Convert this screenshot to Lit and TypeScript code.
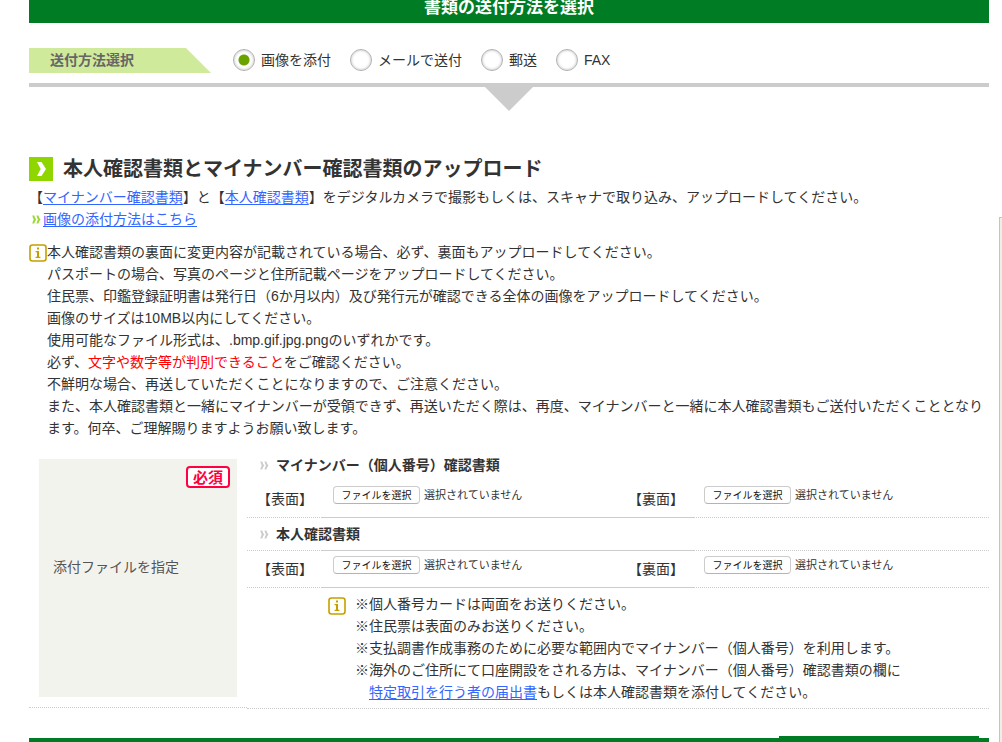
import { LitElement, html, css, svg } from "lit";
import { customElement, property, state } from "lit/decorators.js";

const infoIcon = html`<svg class="info-icon" width="18" height="18" viewBox="0 0 18 18" aria-hidden="true">
  <rect x="1" y="1" width="16" height="16" rx="2.5" fill="#fffef8" stroke="#c3a000" stroke-width="1.6" />
  <path d="M8 3.4h2v2H8zM6.6 7H10v5.8h1.4V14H6.6v-1.2H8V8.2H6.6z" fill="#c3a000" />
</svg>`;

const chevron = (x: number) =>
  svg`<path d=${`M${x} 0.6h1.9Q${x + 2.6} 3.2 ${x + 4} 4.5Q${x + 2.6} 5.8 ${x + 1.9} 8.6H${x}Q${x + 0.5} 5.8 ${x + 1.5} 4.5Q${x + 0.5} 3.2 ${x} 0.6z`} />`;

const doubleChevron = (kind: string) => html`<svg class="chevrons ${kind}" width="9" height="9" viewBox="0 0 9 9" aria-hidden="true">
  ${chevron(0.3)}${chevron(4.5)}
</svg>`;

@customElement("file-field")
export class FileField extends LitElement {
  @property() label = "";
  @state() private fileName = "";

  static styles = css`
    :host {
      display: grid;
      grid-template-columns: 75px 1fr;
      height: 36px;
      align-items: center;
    }
    label {
      padding-left: 10px;
      line-height: 22px;
    }
    .picker {
      display: flex;
      align-items: center;
      gap: 4px;
      padding: 0 0 8px 11px;
    }
    button {
      width: 87px;
      height: 18px;
      padding: 0;
      font: 10px/16px "Noto Sans CJK JP", sans-serif;
      color: #111;
      background: #fff;
      border: 1px solid #ccc;
      border-bottom-color: #b4b4b4;
      border-radius: 4px;
      white-space: nowrap;
    }
    .status {
      font-size: 11px;
      line-height: 16px;
      white-space: nowrap;
    }
    input {
      display: none;
    }
  `;

  private open() {
    (this.renderRoot.querySelector("#file") as HTMLInputElement).click();
  }

  private changed(e: Event) {
    this.fileName = (e.target as HTMLInputElement).files?.[0]?.name ?? "";
  }

  render() {
    return html`
      <label for="pick">${this.label}</label>
      <div class="picker">
        <button id="pick" type="button" @click=${this.open}>ファイルを選択</button>
        <span class="status">${this.fileName || "選択されていません"}</span>
        <input id="file" type="file" accept=".bmp,.gif,.jpg,.png" @change=${this.changed} />
      </div>
    `;
  }
}

@customElement("app-root")
export class AppRoot extends LitElement {
  @state() private method = 0;

  private methods = ["画像を添付", "メールで送付", "郵送", "FAX"];

  static styles = css`
    :host {
      display: flex;
      min-height: 100vh;
      overflow: hidden;
      background: #fff;
      color: #333;
      font: 14px/22px "Liberation Sans", "Noto Sans CJK JP", sans-serif;
    }
    * {
      box-sizing: border-box;
    }
    main {
      flex: 1;
      min-width: 0;
      padding: 0 10px 0 29px;
      display: flex;
      flex-direction: column;
    }
    .side {
      width: 3px;
      margin-top: 217px;
      border: 1px solid #c4c4c0;
      border-width: 1px 0 0 1px;
      background: #eeeee4;
    }
    h1, h2, h3, p, ul {
      margin: 0;
      padding: 0;
    }
    a {
      color: #3366ff;
      text-underline-offset: 2px;
    }
    .banner {
      background: #007d24;
      color: #fff;
      font-size: 17px;
      line-height: 16px;
      padding-bottom: 7px;
      text-align: center;
    }
    .methods {
      display: flex;
      align-items: flex-start;
      gap: 22px;
      padding: 25px 0 10px;
      border-bottom: 4px solid #ccc;
    }
    .methods h2 {
      width: 182px;
      padding-left: 21px;
      background: #d0ea9b;
      clip-path: polygon(0 0, 157px 0, 100% 100%, 0 100%);
      font-size: 14px;
      line-height: 25px;
      color: #666;
    }
    .choices {
      display: flex;
      gap: 19px;
      padding-top: 1px;
    }
    .choices label {
      display: flex;
      align-items: center;
      gap: 6px;
    }
    .choices input {
      appearance: none;
      width: 22px;
      height: 22px;
      margin: 0;
      border: 1px solid #b0b0b0;
      border-radius: 50%;
      background: #fff;
      box-shadow: inset 0 0 3px #bbb;
    }
    .choices input:checked {
      background: radial-gradient(circle, #6aa300 5px, #fff 6px);
    }
    .pointer {
      align-self: center;
      width: 48px;
      height: 24px;
      background: #ccc;
      clip-path: polygon(0 0, 100% 0, 50% 100%);
    }
    .title {
      display: flex;
      align-items: center;
      gap: 10px;
      margin: 46px 0 5px;
      font-size: 20px;
      line-height: 24px;
    }
    .more {
      display: flex;
      align-items: center;
      gap: 2px;
      padding-left: 3px;
    }
    .chevrons {
      flex: none;
      fill: #ccc;
    }
    .chevrons.green {
      fill: #98da30;
    }
    .notice {
      display: flex;
      margin: 11px 0 10px;
    }
    .info-icon {
      flex: none;
      margin-top: 3px;
    }
    .warn {
      color: #f00;
    }
    .attach {
      display: grid;
      grid-template-columns: 218px 1fr;
    }
    .item {
      padding: 10px;
      margin-bottom: 1px;
      border-bottom: 1px dotted #ccc;
      display: flex;
    }
    .item-box {
      flex: 1;
      display: flex;
      flex-direction: column;
      gap: 68px;
      padding: 7px 7px 0 14px;
      background: #f3f3ee;
      color: #555;
    }
    .required {
      align-self: flex-end;
      padding: 0 5px;
      border: 2px solid #ff0040;
      border-radius: 4px;
      background: #fff;
      color: #ff0040;
      font: bold 15px/18px "Noto Sans CJK JP", sans-serif;
    }
    .group {
      display: flex;
      align-items: center;
      gap: 7px;
      padding-left: 13px;
      font-size: 14px;
      line-height: 32px;
    }
    .pair {
      display: grid;
      grid-template-columns: 1fr 1fr;
    }
    .rule {
      display: grid;
      grid-template-columns: 75px 1fr calc(50% - 76px);
    }
    .rule span {
      border-bottom: 1px dotted #ccc;
    }
    .rule .solid {
      border-bottom-style: solid;
    }
    .notes {
      display: flex;
      gap: 9px;
      padding: 5px 0 5px 81px;
      border-bottom: 1px dotted #ccc;
    }
    .notes .info-icon {
      margin-top: 4px;
    }
    .notes ul {
      list-style: none;
    }
    .notes li {
      padding-left: 14px;
      text-indent: -14px;
    }
    footer {
      margin-top: 27px;
      display: flex;
      flex-direction: column;
    }
    .tab {
      align-self: flex-end;
      width: 200px;
      height: 2px;
      margin-right: 10px;
      background: #007d24;
    }
    .bar {
      height: 4px;
      background: #007d24;
    }
  `;

  private rule() {
    return html`<div class="rule"><span></span><span class="solid"></span><span></span></div>`;
  }

  private pair() {
    return html`<div class="pair">
      <file-field label="【表面】"></file-field>
      <file-field label="【裏面】"></file-field>
    </div>`;
  }

  render() {
    return html`
      <main lang="ja">
        <h1 class="banner">書類の送付方法を選択</h1>

        <div class="methods">
          <h2>送付方法選択</h2>
          <div class="choices">
            ${this.methods.map(
              (name, i) => html`<label>
                <input type="radio" name="method" .checked=${i === this.method} @change=${() => (this.method = i)} />${name}</label>`
            )}
          </div>
        </div>
        <div class="pointer"></div>

        <h2 class="title">
          <svg width="24" height="24" viewBox="0 0 24 24" aria-hidden="true">
            <rect width="24" height="24" fill="#8fd600" />
            <path d="M8 5h4.5l4.5 7-4.5 7H8l3.7-7z" fill="#fff" />
          </svg>
          本人確認書類とマイナンバー確認書類のアップロード
        </h2>
        <p>【<a href="#mynumber">マイナンバー確認書類</a>】と【<a href="#identity">本人確認書類</a>】をデジタルカメラで撮影もしくは、スキャナで取り込み、アップロードしてください。</p>
        <p class="more">${doubleChevron("green")}<a href="#howto">画像の添付方法はこちら</a></p>

        <div class="notice">
          ${infoIcon}
          <div>
            <p>本人確認書類の裏面に変更内容が記載されている場合、必ず、裏面もアップロードしてください。</p>
            <p>パスポートの場合、写真のページと住所記載ページをアップロードしてください。</p>
            <p>住民票、印鑑登録証明書は発行日（6か月以内）及び発行元が確認できる全体の画像をアップロードしてください。</p>
            <p>画像のサイズは10MB以内にしてください。</p>
            <p>使用可能なファイル形式は、.bmp.gif.jpg.pngのいずれかです。</p>
            <p>必ず、<span class="warn">文字や数字等が判別できること</span>をご確認ください。</p>
            <p>不鮮明な場合、再送していただくことになりますので、ご注意ください。</p>
            <p>また、本人確認書類と一緒にマイナンバーが受領できず、再送いただく際は、再度、マイナンバーと一緒に本人確認書類もご送付いただくこととなります。何卒、ご理解賜りますようお願い致します。</p>
          </div>
        </div>

        <section class="attach">
          <div class="item">
            <div class="item-box">
              <span class="required">必須</span>
              <span>添付ファイルを指定</span>
            </div>
          </div>
          <div>
            <h3 class="group">${doubleChevron("gray")}マイナンバー（個人番号）確認書類</h3>
            ${this.pair()} ${this.rule()}
            <h3 class="group">${doubleChevron("gray")}本人確認書類</h3>
            ${this.rule()} ${this.pair()} ${this.rule()}
            <div class="notes">
              ${infoIcon}
              <ul>
                <li>※個人番号カードは両面をお送りください。</li>
                <li>※住民票は表面のみお送りください。</li>
                <li>※支払調書作成事務のために必要な範囲内でマイナンバー（個人番号）を利用します。</li>
                <li>※海外のご住所にて口座開設をされる方は、マイナンバー（個人番号）確認書類の欄に<br /><a href="#notification">特定取引を行う者の届出書</a>もしくは本人確認書類を添付してください。</li>
              </ul>
            </div>
          </div>
        </section>

        <footer>
          <div class="tab"></div>
          <div class="bar"></div>
        </footer>
      </main>
      <aside class="side"></aside>
    `;
  }
}
